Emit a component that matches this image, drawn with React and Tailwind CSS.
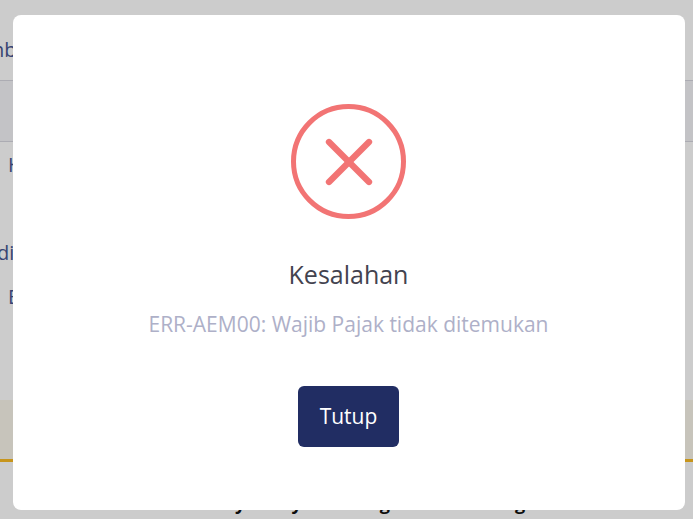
import { X } from 'lucide-react'

const font = { fontFamily: '"Open Sans", sans-serif' }

function PageBehind() {
  return (
    <div className="h-[519px] overflow-hidden bg-white text-[#46558f] text-xl">
      <div className="h-[81px] border-b border-[#d8d8e0] pt-[38px] leading-6 whitespace-nowrap -ml-[36px]">
        Lembar
      </div>
      <div className="h-[61px] bg-[#f4f4f8] border-b border-[#d8d8e0]" />
      <div className="pl-2 pt-[11px] leading-6">H</div>
      <div className="mt-[64px] leading-6 -ml-[3px]">
        di<span className="text-[#d9534f]">.</span>
      </div>
      <div className="pl-2 mt-[20px] leading-6">E</div>
      <div className="mt-[91px] h-[62px] bg-[#f9f5ea] border-b-[3px] border-[#f9bb24]" />
      <div className="mt-[27px] pl-[173px] text-lg font-bold text-[#111] leading-7 whitespace-nowrap">
        Pembayaran yakni dengan nominal tagihan
      </div>
    </div>
  )
}

export default function App() {
  return (
    <div className="relative h-[519px] w-[693px] overflow-hidden" style={font}>
      <PageBehind />
      <div className="absolute inset-0 bg-black/20 flex items-start pl-[13px] pt-[15px]">
        <div className="w-[672px] h-[495px] bg-white rounded-lg flex flex-col items-center pt-[89px] pr-[1px]">
          <div className="w-[115px] h-[115px] rounded-full border-[5px] border-[#f27474] flex items-center justify-center">
            <X size={80} strokeWidth={1.9} className="text-[#f27474]" />
          </div>
          <h2 className="mt-[37px] text-[25px] leading-9 text-[#43434f]">Kesalahan</h2>
          <p className="mt-[18px] text-[21px] leading-7 text-[#aeb0c8]">ERR-AEM00: Wajib Pajak tidak ditemukan</p>
          <button className="mt-[48px] w-[101px] h-[61px] bg-[#212d63] text-white text-[21px] rounded-md">Tutup</button>
        </div>
      </div>
    </div>
  )
}
